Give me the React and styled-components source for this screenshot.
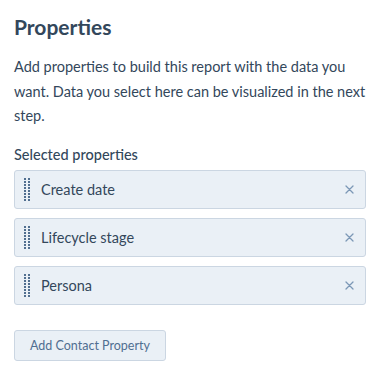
import React from "react";
import styled, { createGlobalStyle } from "styled-components";

const Global = createGlobalStyle`
  html, body { margin: 0; padding: 0; background: #fff; }
  body { font-family: Lato, "Open Sans", sans-serif; color: #33475b; -webkit-font-smoothing: antialiased; }
`;

const Panel = styled.div`
  width: 383px;
  box-sizing: border-box;
  padding: 13px 17px 0 14px;
  display: flex;
  flex-direction: column;
`;

const Title = styled.h2`
  margin: 0;
  font-size: 21px;
  line-height: 28px;
  font-weight: 700;
  color: #33475b;
`;

const Description = styled.p`
  margin: 14px 0 0;
  font-size: 14.5px;
  line-height: 24.5px;
  color: #33475b;
`;

const Label = styled.div`
  margin-top: 16px;
  font-size: 14.5px;
  line-height: 20px;
  font-weight: 500;
  color: #33475b;
`;

const List = styled.div`
  margin-top: 5px;
  display: flex;
  flex-direction: column;
  gap: 9px;
`;

const Item = styled.div`
  height: 39px;
  box-sizing: border-box;
  background: #eaf0f6;
  border: 1px solid #cbd6e2;
  border-radius: 3px;
  display: flex;
  align-items: center;
  padding: 0 10px 0 9px;
`;

const Grip = styled.div`
  display: grid;
  grid-template-columns: repeat(2, 2px);
  grid-auto-rows: 2px;
  column-gap: 2px;
  row-gap: 1px;
  margin-right: 11px;
  span { background: #516f90; width: 2px; height: 2px; }
`;

const ItemLabel = styled.span`
  flex: 1;
  font-size: 14.5px;
  color: #33475b;
`;

const Remove = styled.button`
  border: 0;
  background: none;
  padding: 0;
  width: 12px;
  height: 12px;
  display: flex;
  align-items: center;
  justify-content: center;
  cursor: pointer;
`;

const AddButton = styled.button`
  margin-top: 25px;
  align-self: flex-start;
  height: 31px;
  width: 152px;
  box-sizing: border-box;
  background: #eaf0f6;
  border: 1px solid #cbd6e2;
  border-radius: 3px;
  font-family: Lato, "Open Sans", sans-serif;
  font-size: 12.5px;
  color: #506e91;
  padding: 0;
`;

const items = ["Create date", "Lifecycle stage", "Persona"];

export default function App() {
  return (
    <>
      <Global />
      <Panel>
        <Title>Properties</Title>
        <Description>
          Add properties to build this report with the data you want. Data you select here can be visualized in the next step.
        </Description>
        <Label>Selected properties</Label>
        <List>
          {items.map((it) => (
            <Item key={it}>
              <Grip>
                {Array.from({ length: 16 }).map((_, i) => (
                  <span key={i} />
                ))}
              </Grip>
              <ItemLabel>{it}</ItemLabel>
              <Remove aria-label="Remove">
                <svg width="9" height="9" viewBox="0 0 9 9">
                  <path d="M1 1L8 8M8 1L1 8" stroke="#7c98b6" strokeWidth="1.3" strokeLinecap="round" />
                </svg>
              </Remove>
            </Item>
          ))}
        </List>
        <AddButton>Add Contact Property</AddButton>
      </Panel>
    </>
  );
}
